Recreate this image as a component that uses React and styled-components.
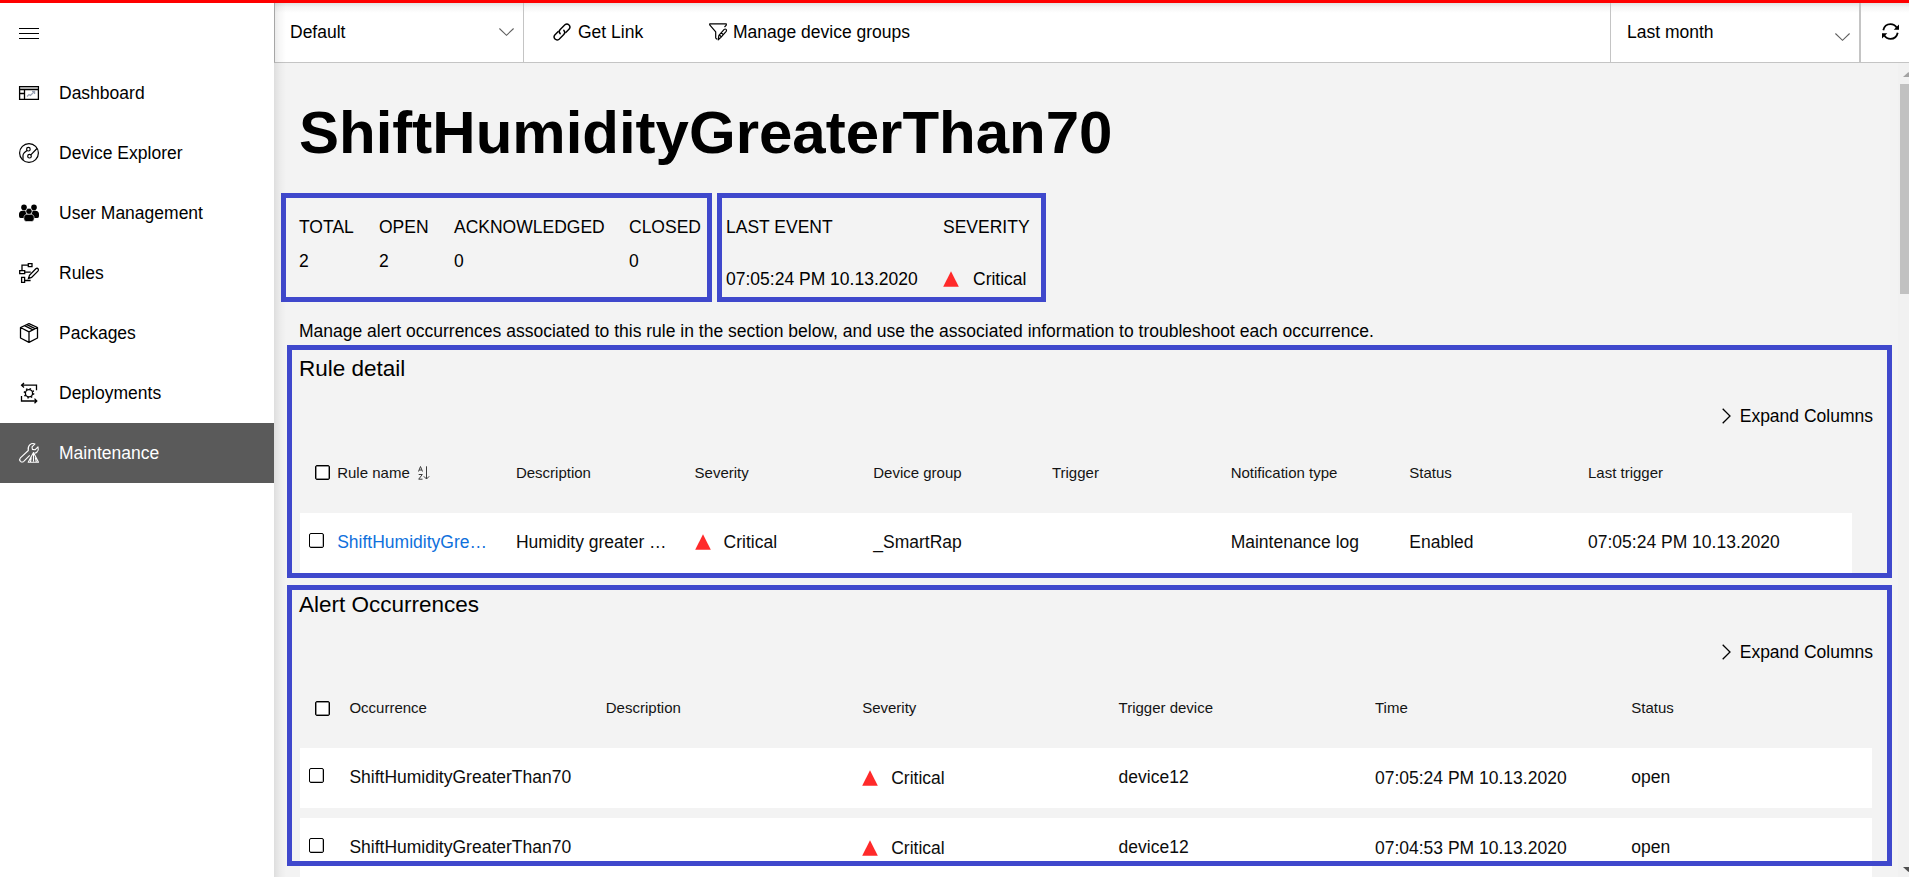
import React from "react";
import styled, { createGlobalStyle, css } from "styled-components";

const GlobalStyle = createGlobalStyle`
  *, *::before, *::after { box-sizing: border-box; }
  html, body { margin: 0; padding: 0; overflow: hidden; }
  body {
    font-family: "Liberation Sans", Arial, sans-serif;
    font-size: 17.5px;
    line-height: 24px;
    color: #000;
    background: #fff;
  }
`;

const Page = styled.div`
  display: flex;
  flex-direction: column;
  width: 100vw;
  height: 100vh;
  overflow: hidden;
`;

const TopBar = styled.div`
  flex: none;
  height: 3px;
  background: #ff0000;
`;

const Shell = styled.div`
  display: flex;
  flex: 1;
  min-height: 0;
`;

const Sidebar = styled.nav`
  flex: none;
  width: 274px;
  background: #fff;
`;

const NavItem = styled.div`
  display: flex;
  align-items: center;
  gap: 20px;
  height: 60px;
  padding-left: 19px;
  color: ${(p) => (p.$active ? "#fff" : "#000")};
  background: ${(p) => (p.$active ? "#5a5a5a" : "transparent")};
`;

const Glyph = styled.svg`
  display: block;
  flex: none;
  width: ${(p) => p.$w || 20}px;
  height: ${(p) => p.$h || p.$w || 20}px;
  fill: none;
  stroke: currentColor;
  overflow: visible;
`;

const NavLabel = styled.span`
  padding-bottom: 1px;
  white-space: nowrap;
`;

const Main = styled.main`
  position: relative;
  display: flex;
  flex: 1;
  flex-direction: column;
  min-width: 0;
  background: #f3f3f3;

  &::after {
    content: "";
    position: absolute;
    inset: 0 auto 0 0;
    width: 12px;
    background: linear-gradient(to right, rgba(0, 0, 0, 0.085), rgba(0, 0, 0, 0.03) 50%, transparent);
    pointer-events: none;
  }
`;

const Toolbar = styled.header`
  display: flex;
  flex: none;
  height: 60px;
  border-left: 1px solid #b5b5b5;
  border-bottom: 1px solid #c4c4c4;
  background: linear-gradient(to bottom, #e3e3e3, #f5f5f5 4px, #fff 10px);
`;

const ToolCell = styled.div`
  display: flex;
  align-items: center;
  flex: none;
  width: ${(p) => p.$w}px;
  padding: 0 ${(p) => p.$right || 0}px 2px ${(p) => p.$left}px;
  gap: ${(p) => p.$gap || 6}px;
  white-space: nowrap;
  ${(p) => p.$spread && css`justify-content: space-between;`}
  ${(p) => p.$divider === "right" && css`border-right: 1px solid #c4c4c4;`}
  ${(p) => p.$divider === "left" && css`border-left: 1px solid #c4c4c4;`}
  ${(p) => p.$divider === "bold" && css`border-left: 2px solid #c4c4c4;`}
`;

const Spacer = styled.div`
  flex: 1;
`;

const LowChevron = styled.span`
  display: block;
  padding-top: 10px;
`;

const Body = styled.div`
  display: flex;
  flex: 1;
  min-height: 0;
`;

const Content = styled.section`
  flex: 1;
  min-width: 0;
  padding-top: 38px;
  overflow: hidden;
`;

const Title = styled.h1`
  margin: 0 0 28px 25px;
  font-size: 60px;
  line-height: 64px;
  font-weight: 700;
`;

const Summary = styled.div`
  display: flex;
  gap: 5px;
  margin-left: 7px;
`;

const frame = css`
  border: 5px solid #3f48cc;
`;

const StatBox = styled.div`
  ${frame}
  display: grid;
  grid-template-columns: ${(p) => p.$cols};
  align-content: start;
  width: ${(p) => p.$w}px;
  height: 109px;
  padding: 17px 0 0 ${(p) => p.$left}px;
  white-space: nowrap;
`;

const Stat = styled.div`
  display: flex;
  flex-direction: column;
  gap: ${(p) => p.$gap}px;
`;

const SeverityTag = styled.span`
  display: inline-flex;
  align-items: center;
  gap: ${(p) => p.$gap || 13}px;
`;

const Intro = styled.p`
  margin: 17px 0 2px 25px;
  white-space: nowrap;
`;

const Panel = styled.section`
  position: relative;
  width: 1605px;
  height: ${(p) => p.$h}px;
  margin: 0 0 7px 13px;
  padding: ${(p) => p.$top}px 0 0 12px;

  &::after {
    content: "";
    position: absolute;
    inset: 0;
    ${frame}
    pointer-events: none;
  }
`;

const PanelTitle = styled.h2`
  margin: 0 0 21px;
  font-size: 22.5px;
  line-height: 28px;
  font-weight: 400;
`;

const ExpandButton = styled.div`
  display: flex;
  align-items: center;
  justify-content: flex-end;
  gap: 9px;
  height: 24px;
  margin-bottom: 5px;
  padding-right: 19px;
`;

const Table = styled.div`
  width: ${(p) => p.$w}px;
  margin-left: 1px;
`;

const TableRow = styled.div`
  display: grid;
  grid-template-columns: ${(p) => p.$cols};
  align-items: center;
  height: 60px;
  margin-bottom: 10px;
  background: #fff;
  color: #0c0c0c;
  white-space: nowrap;
`;

const TableHead = styled(TableRow)`
  height: ${(p) => p.$h}px;
  margin-bottom: 0;
  background: transparent;
  font-size: 15px;
  color: #141414;
`;

const Cell = styled.div`
  display: flex;
  align-items: center;
  gap: 8px;
  padding-bottom: ${(p) => p.$lift || 0}px;
  color: ${(p) => (p.$link ? "#0f70dc" : "inherit")};
`;

const CheckBox = styled.span`
  width: 15px;
  height: 15px;
  margin-left: ${(p) => (p.$head ? 15 : 9)}px;
  margin-bottom: ${(p) => (p.$head ? 1 : 5)}px;
  border: 1px solid #000;
  border-radius: 2px;
  background: #fff;
  box-shadow: ${(p) => (p.$head ? "inset 0 0 0 0.5px #222" : "inset -1px -1px 0 #bbb")};
`;

const ScrollTrack = styled.div`
  display: flex;
  flex: none;
  flex-direction: column;
  align-items: flex-start;
  justify-content: space-between;
  width: 11px;
  overflow: hidden;
  background: #f1f1f1;
`;

const ScrollThumb = styled.div`
  width: 17px;
  height: 210px;
  margin: 0 0 auto 2px;
  background: #c1c1c1;
`;

const ScrollArrow = styled.div`
  flex: none;
  width: 21px;
  height: 21px;
  padding: ${(p) => (p.$down ? 11 : 9)}px 0 0 5px;
  color: ${(p) => (p.$down ? "#505050" : "#a3a3a3")};
`;

const MenuIcon = () => (
  <Glyph viewBox="0 0 20 20" strokeWidth="1" shapeRendering="crispEdges">
    <path d="M0 5.500h20M0 10.500h20M0 15.500h20" />
  </Glyph>
);

const DashboardIcon = () => (
  <Glyph viewBox="0 0 20 20">
    <path d="M.6 3.6h18.8v12.8H.6zM.6 6.5h18.8M5.5 6.5v10M.6 10.5h5" strokeWidth="1.3" />
    <path d="M1.5 4.9h17" stroke="#8c8c8c" strokeWidth=".8" />
    <path d="M8 13.5l2-2 1.4 1 4-4M13 8.3h2.6v2.6" stroke="#9aa3b5" strokeWidth="1.2" />
  </Glyph>
);

const ExplorerIcon = () => (
  <Glyph viewBox="0 0 20 20" strokeWidth="1.2">
    <circle cx="10" cy="10" r="9.4" />
    <circle cx="9.4" cy="6.2" r="1.8" />
    <circle cx="10.5" cy="13.2" r="1.8" />
    <path d="M8 7.5L5.2 9.8Q4 11 4 12.5V17M11.8 11.9L18 5.5" />
  </Glyph>
);

const UsersIcon = () => (
  <Glyph viewBox="0 0 20 20">
    <g fill="currentColor" stroke="none">
      <circle cx="5" cy="4.4" r="2.800" />
      <circle cx="15" cy="4.4" r="2.800" />
      <path d="M0 13V10.800Q.5 7.800 3.500 7.800h3Q7 11 8 12l-3 3H1.500Q0 15 0 13zM20 13V10.800Q19.500 7.800 16.500 7.800h-3Q13 11 12 12l3 3h3.500Q20 15 20 13z" />
    </g>
    <g fill="currentColor" stroke="#fff" strokeWidth=".6">
      <path d="M4.800 15.500Q4.800 11.200 8.500 11.200h3Q15.200 11.200 15.200 15.500q0 3-2.500 3H7.300q-2.500 0-2.500-3z" />
      <circle cx="10" cy="8.300" r="3.100" />
    </g>
  </Glyph>
);

const RulesIcon = () => (
  <Glyph viewBox="0 0 20 20" strokeWidth="1.3">
    <path d="M9.300.7h3.700v3H9.300zM.7 7.700h5v3h-5zM2.600 14.300h3v5h-3z" />
    <path d="M9.300 2.200H3v5.500M5.700 9.200h6M5.600 17.500h6" />
    <path d="M9.500 15.500l1-3.200 6.300-6.500q1.300-1 2.300 0 .8 1.200-.2 2.300l-6.300 6.300z" />
  </Glyph>
);

const PackageIcon = () => (
  <Glyph viewBox="0 0 20 20" strokeWidth="1.3" strokeLinejoin="round">
    <path d="M10 .7l8.500 3.800v10.500L10 19.300 1.500 15V4.500zM1.500 4.500L10 8.800l8.500-4.300M10 8.800v10.500M5.500 2.700l8.500 4.100M7.800 1.700l8.200 4" />
  </Glyph>
);

const DeployIcon = () => (
  <Glyph viewBox="0 0 20 20" strokeWidth="1.3">
    <path d="M2 2.200h15.500v5M5 0L2.600 2.200 5 4.400M2.500 13v5h15.500M15.500 15.600l2.300 2.400-2.300 2.200" />
    <circle cx="10" cy="10.200" r="3.600" />
    <circle cx="10" cy="10.200" r="4.600" strokeWidth="1.500" strokeDasharray="1.500 2.113" />
  </Glyph>
);

const MaintenanceIcon = () => (
  <Glyph viewBox="0 0 20 20" strokeWidth="1.100" strokeLinejoin="round">
    <path d="M10.700 12.300l-5.900 6q-1.700 1.500-3.400 0-1.500-1.700 0-3.400L9.300 7.500Q8.600 4 10.700 1.900 13-.1 16 .9l-3 3 .4 2.500 2.600.4 3-3q1 3-1 5.200-1 1-2.500 1.200" />
    <path d="M14.500 9.500L9.200 19.300h10.300zM14.500 10.500v8M12.300 14.500l-.800 4.300M16.300 14.500l1 4.300" />
  </Glyph>
);

const Chevron = () => (
  <Glyph $w={15} $h={8} viewBox="0 0 15 8" strokeWidth="1.100" color="#606060">
    <path d="M.4.500L7.500 7.300 14.600.5" />
  </Glyph>
);

const ChevronRight = () => (
  <Glyph $w={9} $h={16} viewBox="0 0 9 16" strokeWidth="1.300">
    <path d="M.7.700L8 8 .7 15.300" />
  </Glyph>
);

const LinkIcon = () => (
  <Glyph $w={18} viewBox="0 0 18 18" strokeWidth="1.400" strokeLinecap="round">
    <path d="M7.200 10.800Q5.200 8.500 7.200 6.500L11.900 1.800Q14 .1 16 1.900 17.900 4 16.200 6.100L12.800 9.500" />
    <path d="M10.800 7.200Q12.800 9.500 10.800 11.500L6.100 16.200Q4 17.900 2 16.100.1 14 1.800 11.900L5.200 8.500" />
  </Glyph>
);

const FilterIcon = () => (
  <Glyph $w={18} viewBox="0 0 18 18" strokeWidth="1.200" strokeLinejoin="round">
    <path d="M6.700 15.300V8.800L.7 1.800V.9h16.600v1.200L15.500 4M6.700 15.300l1.500 1" />
    <path d="M9.200 16.800l.7-4.400 5.300-6q1-.8 1.900 0 .8.900.1 1.900l-5.300 6.100zM10.500 11.800l1.700 2M12.300 9.800l1.700 1.600" />
  </Glyph>
);

const RefreshIcon = () => (
  <Glyph $w={17} viewBox="0 0 17 17" strokeWidth="1.800">
    <path d="M1.300 7.200Q2.600 1.100 8.500 1.100q4 0 6.300 3.700M15.700 9.800Q14.400 15.900 8.500 15.900q-4 0-6.300-3.700" />
    <path d="M17 1.500v5.300h-5.300zM0 15.500v-5.300h5.300z" fill="currentColor" stroke="none" />
  </Glyph>
);

const SortIcon = () => (
  <Glyph $w={12} $h={14} viewBox="0 0 12 14" strokeWidth="1" color="#3c3c3c">
    <path d="M.5 5.500L2.500.5l2 5M1.200 4h2.600M.7 8.500h3.600L.7 13.200h3.800M8.500.3v12.500M5.800 10.300l2.700 2.700 2.700-2.700" />
  </Glyph>
);

const Triangle = () => (
  <Glyph $w={16} viewBox="0 0 16 16">
    <path d="M8 .3L15.800 15.700H.2z" fill="#ff2a2a" stroke="none" />
  </Glyph>
);

const NAV = [
  ["Dashboard", DashboardIcon],
  ["Device Explorer", ExplorerIcon],
  ["User Management", UsersIcon],
  ["Rules", RulesIcon],
  ["Packages", PackageIcon],
  ["Deployments", DeployIcon],
  ["Maintenance", MaintenanceIcon],
];

const COUNTS = [
  ["TOTAL", 2],
  ["OPEN", 2],
  ["ACKNOWLEDGED", 0],
  ["CLOSED", 0],
];

const RULE_COLS = "37.2px repeat(8, 178.7px)";
const ALERT_COLS = "49.4px repeat(6, 256.4px)";
const RULE_HEAD = ["Description", "Severity", "Device group", "Trigger", "Notification type", "Status", "Last trigger"];
const ALERT_HEAD = ["Occurrence", "Description", "Severity", "Trigger device", "Time", "Status"];
const ALERTS = ["07:05:24 PM 10.13.2020", "07:04:53 PM 10.13.2020"];

const Expand = () => (
  <ExpandButton>
    <ChevronRight />
    Expand Columns
  </ExpandButton>
);

export default function App() {
  return (
    <Page>
      <GlobalStyle />
      <TopBar />
      <Shell>
        <Sidebar>
          <NavItem>
            <MenuIcon />
          </NavItem>
          {NAV.map(([label, Icon]) => (
            <NavItem key={label} $active={label === "Maintenance"}>
              <Icon />
              <NavLabel>{label}</NavLabel>
            </NavItem>
          ))}
        </Sidebar>
        <Main>
          <Toolbar>
            <ToolCell $w={249} $left={15} $right={9} $divider="right" $spread>
              Default
              <Chevron />
            </ToolCell>
            <ToolCell $w={156} $left={29} $gap={7}>
              <LinkIcon />
              Get Link
            </ToolCell>
            <ToolCell $w={230} $left={29}>
              <FilterIcon />
              Manage device groups
            </ToolCell>
            <Spacer />
            <ToolCell $w={249} $left={16} $right={9} $divider="left" $spread>
              Last month
              <LowChevron>
                <Chevron />
              </LowChevron>
            </ToolCell>
            <ToolCell $w={50} $left={21} $divider="bold">
              <RefreshIcon />
            </ToolCell>
          </Toolbar>
          <Body>
            <Content>
              <Title>ShiftHumidityGreaterThan70</Title>
              <Summary>
                <StatBox $w={431} $left={13} $cols="80px 75px 175px auto">
                  {COUNTS.map(([label, value]) => (
                    <Stat key={label} $gap={10}>
                      <span>{label}</span>
                      <span>{value}</span>
                    </Stat>
                  ))}
                </StatBox>
                <StatBox $w={329} $left={4} $cols="217px auto">
                  <Stat $gap={28}>
                    <span>LAST EVENT</span>
                    <span>07:05:24 PM 10.13.2020</span>
                  </Stat>
                  <Stat $gap={28}>
                    <span>SEVERITY</span>
                    <SeverityTag $gap={14}>
                      <Triangle />
                      Critical
                    </SeverityTag>
                  </Stat>
                </StatBox>
              </Summary>
              <Intro>
                Manage alert occurrences associated to this rule in the section below, and use the associated
                information to troubleshoot each occurrence.
              </Intro>
              <Panel $h={233} $top={10}>
                <PanelTitle>Rule detail</PanelTitle>
                <Expand />
                <Table $w={1552}>
                  <TableHead $cols={RULE_COLS} $h={80}>
                    <CheckBox $head />
                    <Cell>
                      Rule name
                      <SortIcon />
                    </Cell>
                    {RULE_HEAD.map((h) => (
                      <Cell key={h}>{h}</Cell>
                    ))}
                  </TableHead>
                  <TableRow $cols={RULE_COLS}>
                    <CheckBox />
                    <Cell $link $lift={2}>ShiftHumidityGre…</Cell>
                    <Cell $lift={2}>Humidity greater …</Cell>
                    <Cell $lift={2}>
                      <SeverityTag>
                        <Triangle />
                        Critical
                      </SeverityTag>
                    </Cell>
                    <Cell $lift={2}>_SmartRap</Cell>
                    <Cell />
                    <Cell $lift={2}>Maintenance log</Cell>
                    <Cell $lift={2}>Enabled</Cell>
                    <Cell $lift={2}>07:05:24 PM 10.13.2020</Cell>
                  </TableRow>
                </Table>
              </Panel>
              <Panel $h={281} $top={6}>
                <PanelTitle>Alert Occurrences</PanelTitle>
                <Expand />
                <Table $w={1572}>
                  <TableHead $cols={ALERT_COLS} $h={79}>
                    <CheckBox $head />
                    {ALERT_HEAD.map((h) => (
                      <Cell key={h} $lift={2}>{h}</Cell>
                    ))}
                  </TableHead>
                  {ALERTS.map((time) => (
                    <TableRow key={time} $cols={ALERT_COLS}>
                      <CheckBox />
                      <Cell $lift={2}>ShiftHumidityGreaterThan70</Cell>
                      <Cell />
                      <Cell>
                        <SeverityTag>
                          <Triangle />
                          Critical
                        </SeverityTag>
                      </Cell>
                      <Cell $lift={2}>device12</Cell>
                      <Cell>{time}</Cell>
                      <Cell $lift={2}>open</Cell>
                    </TableRow>
                  ))}
                </Table>
              </Panel>
            </Content>
            <ScrollTrack>
              <ScrollArrow>
                <Glyph $w={11} $h={5} viewBox="0 0 11 5">
                  <path d="M5.500 0L11 5H0z" fill="currentColor" stroke="none" />
                </Glyph>
              </ScrollArrow>
              <ScrollThumb />
              <ScrollArrow $down>
                <Glyph $w={11} $h={5} viewBox="0 0 11 5">
                  <path d="M0 0h11L5.500 5z" fill="currentColor" stroke="none" />
                </Glyph>
              </ScrollArrow>
            </ScrollTrack>
          </Body>
        </Main>
      </Shell>
    </Page>
  );
}
